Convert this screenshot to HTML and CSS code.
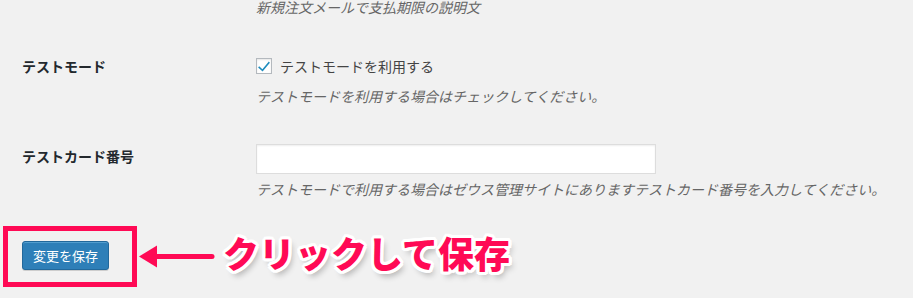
FILE: index.html
```html
<!DOCTYPE html>
<html lang="ja">
<head>
<meta charset="utf-8">
<title>設定</title>
<link rel="stylesheet" href="styles.css">
</head>
<body>
<div class="page">
  <div class="row">
    <div class="label"></div>
    <div class="field">
      <p class="desc desc-first">新規注文メールで支払期限の説明文</p>
    </div>
  </div>

  <div class="row row-mode">
    <div class="label">テストモード</div>
    <div class="field">
      <label class="check">
        <span class="box">
          <svg width="14" height="14" viewBox="0 0 14 14"><path d="M2.2 7.2 L5.4 10.2 L11.8 2.6 L12.9 3.8 L5.6 12.4 L1.1 8.4 Z" fill="#1e8cbe"/></svg>
        </span>
        <span class="check-text">テストモードを利用する</span>
      </label>
      <p class="desc desc-gap">テストモードを利用する場合はチェックしてください。</p>
    </div>
  </div>

  <div class="row row-card">
    <div class="label label-card">テストカード番号</div>
    <div class="field">
      <div class="input"></div>
      <p class="desc desc-input">テストモードで利用する場合はゼウス管理サイトにありますテストカード番号を入力してください。</p>
    </div>
  </div>

  <div class="save-row">
    <div class="highlight">
      <button class="btn" type="button">変更を保存</button>
    </div>
    <svg class="arrow" width="76" height="24" viewBox="0 0 76 24">
      <path d="M0 11.5 L18 0.5 L18 22.5 Z" fill="#ff0a55"/>
      <line x1="16" y1="11.5" x2="73" y2="11.5" stroke="#ff0a55" stroke-width="5" stroke-linecap="round"/>
    </svg>
    <div class="caption">クリックして保存</div>
  </div>
</div>
</body>
</html>
```

FILE: styles.css
```css
html, body {
  margin: 0;
  padding: 0;
  background: #f1f1f1;
}

body {
  font-family: "Noto Sans CJK JP", "Noto Sans", sans-serif;
  color: #444;
  font-size: 14px;
  line-height: 20px;
  overflow: hidden;
}

.page {
  padding-left: 22px;
}

.row {
  display: flex;
}

.label {
  width: 234px;
  flex: none;
  font-weight: 700;
  color: #23282d;
  font-size: 14px;
  line-height: 20px;
}

.field {
  flex: 1;
}

.row-mode {
  margin-top: 42px;
}

.row-card {
  margin-top: 38px;
}

.label-card {
  padding-top: 2px;
}

.desc {
  margin: 0;
  font-style: italic;
  color: #666;
  font-size: 14px;
  line-height: 20px;
}

.desc-first {
  line-height: 14px;
}

.desc-gap {
  margin-top: 10px;
}

.desc-input {
  margin-top: 5px;
}

.check {
  display: flex;
  align-items: center;
  height: 20px;
}

.box {
  width: 16px;
  height: 16px;
  box-sizing: border-box;
  border: 1px solid #b4b9be;
  background: #fff;
  box-shadow: inset 0 1px 2px rgba(0, 0, 0, 0.1);
  display: flex;
  align-items: center;
  justify-content: center;
  margin-right: 8px;
}

.box svg {
  display: block;
}

.check-text {
  color: #444;
}

.input {
  width: 400px;
  height: 30px;
  box-sizing: border-box;
  background: #fff;
  border: 1px solid #ddd;
  box-shadow: inset 0 1px 2px rgba(0, 0, 0, 0.07);
}

.save-row {
  display: flex;
  align-items: center;
  margin-top: 27px;
  margin-left: -19px;
}

.highlight {
  width: 134px;
  height: 61px;
  box-sizing: border-box;
  border: 5px solid #ff0a55;
  padding: 10px 0 0 14px;
  flex: none;
}

.btn {
  display: block;
  width: 87px;
  height: 29px;
  box-sizing: border-box;
  padding: 0;
  border: 1px solid #22689b;
  border-radius: 3px;
  background: #2e7fb8;
  box-shadow: inset 0 1px 0 rgba(120, 190, 230, 0.5), 0 1px 0 rgba(0, 0, 0, 0.15);
  color: #fff;
  font-family: "Noto Sans CJK JP", "Noto Sans", sans-serif;
  font-size: 13px;
  line-height: 26px;
  text-align: center;
}

.arrow {
  display: block;
  flex: none;
  margin-left: 2px;
}

.caption {
  margin-left: 8px;
  margin-bottom: 10px;
  font-family: "Noto Sans CJK JP", sans-serif;
  font-weight: 900;
  font-size: 36px;
  line-height: 44px;
  color: #ff0a55;
  white-space: nowrap;
  text-shadow:
    3px 0 0 #fff, -3px 0 0 #fff, 0 3px 0 #fff, 0 -3px 0 #fff,
    2px 2px 0 #fff, -2px 2px 0 #fff, 2px -2px 0 #fff, -2px -2px 0 #fff,
    3px 1.5px 0 #fff, -3px 1.5px 0 #fff, 3px -1.5px 0 #fff, -3px -1.5px 0 #fff,
    1.5px 3px 0 #fff, -1.5px 3px 0 #fff, 1.5px -3px 0 #fff, -1.5px -3px 0 #fff,
    3px 5px 6px rgba(0, 0, 0, 0.3);
}
```
